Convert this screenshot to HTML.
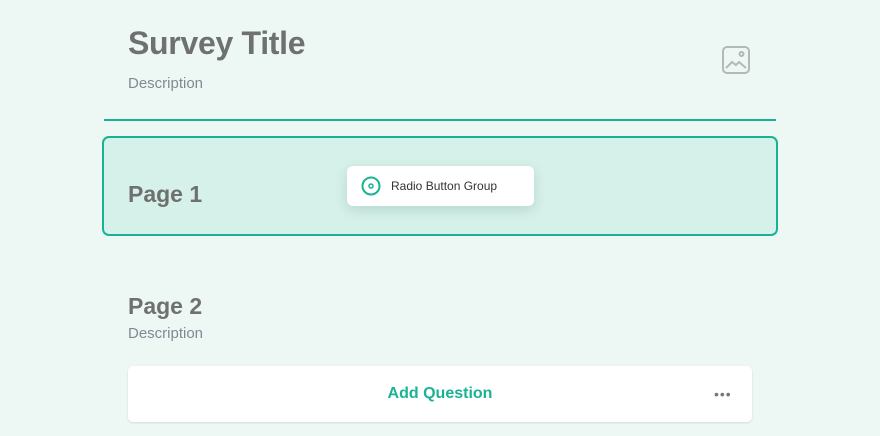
<!DOCTYPE html>
<html><head><style>
body{margin:0;width:880px;height:436px;background:#edf8f5;font-family:"Liberation Sans",sans-serif;position:relative;overflow:hidden}
.a{position:absolute}
</style></head><body>
<div class="a" style="left:128px;top:25px;font-size:32px;font-weight:bold;color:#6f716f;letter-spacing:-0.3px">Survey Title</div>
<div class="a" style="left:128px;top:75px;font-size:15px;color:#7f8a92">Description</div>
<svg class="a" style="left:722px;top:46px" width="28" height="28" viewBox="0 0 28 28" fill="none" stroke="#b4b8b6" stroke-width="2"><rect x="1" y="1" width="26" height="26" rx="4"/><circle cx="19.5" cy="8" r="2"/><path d="M4 22 L10 16 L14 19 L17 16 L24 22"/></svg>
<div class="a" style="left:104px;top:119px;width:672px;height:2px;background:#19b394"></div>
<div class="a" style="left:102px;top:136px;width:672px;height:96px;border:2px solid #19b394;border-radius:7px;background:#d6f0ea"></div>
<div class="a" style="left:128px;top:181px;font-size:23px;font-weight:bold;color:#6f716f">Page 1</div>
<div class="a" style="left:347px;top:166px;width:187px;height:40px;background:#fff;border-radius:6px;box-shadow:0 4px 12px rgba(0,80,60,.15)"></div>
<svg class="a" style="left:361px;top:176px" width="20" height="20"><circle cx="10" cy="10" r="8.5" fill="none" stroke="#19b394" stroke-width="2"/><circle cx="10" cy="10" r="2" fill="none" stroke="#19b394" stroke-width="1.5"/></svg>
<div class="a" style="left:391px;top:179px;font-size:12px;color:#333">Radio Button Group</div>
<div class="a" style="left:128px;top:293px;font-size:23px;font-weight:bold;color:#6f716f">Page 2</div>
<div class="a" style="left:128px;top:325px;font-size:15px;color:#7f8a92">Description</div>
<div class="a" style="left:128px;top:366px;width:624px;height:56px;background:#fff;border-radius:5px;box-shadow:0 1px 2px rgba(0,0,0,.12)"></div>
<div class="a" style="left:128px;top:385px;width:624px;text-align:center;font-size:16px;font-weight:bold;color:#19b394">Add Question</div>
<div class="a" style="left:714px;top:386px;font-size:14px;letter-spacing:1px;color:#777">•••</div>
</body></html>
